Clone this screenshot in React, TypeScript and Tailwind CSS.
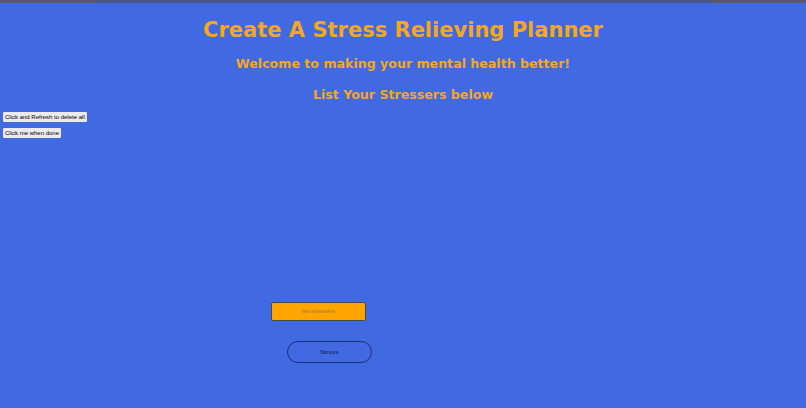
export default function App() {
  return (
    <div className="flex h-[408px] w-full flex-col overflow-hidden bg-[#4169e1] font-['DejaVu_Sans',sans-serif]">
      {/* thin strip at the very top */}
      <div className="flex h-[3px] w-full">
        <div className="w-[97px] bg-[#5b5a6c]" />
        <div className="flex-1 bg-[#4a5588]" />
        <div className="w-[94px] bg-[#5b5a6c]" />
      </div>

      <h1 className="mt-[14px] text-center text-[21px] font-bold leading-[26px] text-[#f5a623]">
        Create A Stress Relieving Planner
      </h1>
      <h2 className="mt-[13px] text-center text-[12.6px] font-bold leading-[16px] text-[#f5a623]">
        Welcome to making your mental health better!
      </h2>
      <h3 className="mt-[15px] text-center text-[12.6px] font-bold leading-[16px] text-[#f5a623]">
        List Your Stressers below
      </h3>

      <div className="mt-[9px] flex flex-col items-start gap-[6px] pl-[3px] font-['Liberation_Sans',sans-serif]">
        <button className="h-[10px] rounded-[1px] bg-[#ebebef] px-[2px] text-[6px] leading-[10px] text-black">
          Click and Refresh to delete all
        </button>
        <button className="h-[10px] rounded-[1px] bg-[#ebebef] px-[2px] text-[6px] leading-[10px] text-black">
          Click me when done
        </button>
      </div>

      <div className="mt-[164px] flex flex-col items-start font-['Liberation_Sans',sans-serif]">
        <button className="ml-[271px] h-[19px] w-[95px] rounded-[2px] border border-[#4a4a4a] bg-[#ffa500] text-[6px] text-[#a87a3a]">
          list stressers
        </button>
        <button className="ml-[287px] mt-[20px] h-[22px] w-[85px] rounded-full border border-[#1e2f7a] text-[6px] font-bold text-[#1e2f7a]">
          Stress
        </button>
      </div>
    </div>
  )
}
